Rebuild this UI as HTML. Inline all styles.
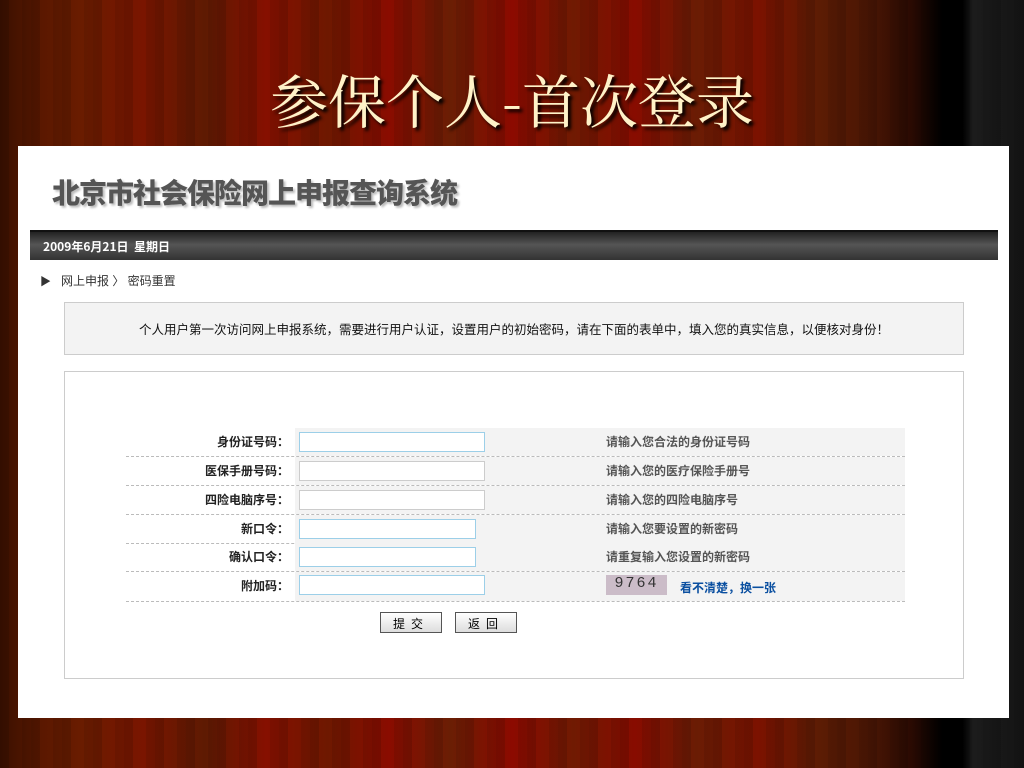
<!DOCTYPE html>
<html><head><meta charset="utf-8"><style>
*{margin:0;padding:0;box-sizing:border-box}
body{width:1024px;height:768px;overflow:hidden;position:relative;font-family:"Liberation Sans","Noto Sans CJK SC",sans-serif;
background:linear-gradient(90deg,#3a1000 0%,#5a1800 4%,#6a1c00 8%,#7a1500 14%,#5e1a02 20%,#861000 26%,#6e1800 32%,#8a0c00 38%,#6a1e04 44%,#8c0a00 50%,#701a02 56%,#880c00 62%,#6a1c04 68%,#7c1200 74%,#5c1c04 80%,#4a1604 85%,#2a0a02 89%,#000 92%,#000 94%,#1c1c1c 95%,#141414 100%);}
.curt{position:absolute;left:0;top:0;width:1024px;height:768px;background:repeating-linear-gradient(90deg,rgba(0,0,0,.12) 0 9px,rgba(255,255,255,0) 9px 22px,rgba(0,0,0,.08) 22px 31px)}
h1{position:absolute;top:56px;left:0;width:1024px;text-align:center;font:400 58px "Noto Serif CJK SC",serif;color:#fff2c8;text-shadow:3px 3px 3px #000}
.panel{position:absolute;left:18px;top:146px;width:991px;height:572px;background:#fff}
.sys{position:absolute;left:34px;top:26px;font:900 28px "Noto Sans CJK SC",sans-serif;color:#555;text-shadow:2px 2px 2px #bbb;letter-spacing:-1px}
.bar{position:absolute;left:12px;top:84px;width:968px;height:30px;background:linear-gradient(#222,#555 45%,#333);border-top:2px solid #111;color:#fff;font:bold 12px "Noto Sans CJK SC",sans-serif;padding:6px 0 0 13px}
.bc{position:absolute;left:22px;top:126px;font-size:12px;color:#333}
.bc b{font-size:11px;margin-right:10px}
.note{position:absolute;left:46px;top:156px;width:900px;height:53px;background:#f3f3f3;border:1px solid #ccc;font-size:12.5px;text-align:center;padding-top:16px;color:#111}
.form{position:absolute;left:46px;top:225px;width:900px;height:308px;border:1px solid #ccc}
.row{position:absolute;left:108px;width:779px;height:29px;border-bottom:1px dashed #bbb}
.row .bg{position:absolute;left:169px;top:0;width:610px;height:28px;background:#f3f3f3}
.lab{position:absolute;right:616px;top:5px;font:bold 12px "Noto Sans CJK SC",sans-serif;color:#222;white-space:nowrap}
.inp{position:absolute;left:173px;top:4px;height:20px;background:#fff;border:1px solid #9ccfe8}
.inp.g{border-color:#ccc}
.hint{position:absolute;left:480px;top:5px;font:bold 12px "Noto Sans CJK SC",sans-serif;color:#555}
.btn{position:absolute;top:466px;width:62px;height:21px;border:1px solid #555;background:linear-gradient(#fff,#ddd);font-size:12px;text-align:center;padding-top:2px;letter-spacing:6px}
</style></head><body>
<div class="curt"></div>
<h1>参保个人-首次登录</h1>
<div class="panel">
<div class="sys">北京市社会保险网上申报查询系统</div>
<div class="bar">2009年6月21日&nbsp; 星期日</div>
<div class="bc"><b>▶</b>网上申报 〉&nbsp;密码重置</div>
<div class="note">个人用户第一次访问网上申报系统，需要进行用户认证，设置用户的初始密码，请在下面的表单中，填入您的真实信息，以便核对身份！</div>
<div class="form"></div>
<div class="row" style="top:282px"><div class="bg"></div><span class="lab">身份证号码：</span><div class="inp" style="width:186px"></div><span class="hint">请输入您合法的身份证号码</span></div>
<div class="row" style="top:311px"><div class="bg"></div><span class="lab">医保手册号码：</span><div class="inp g" style="width:186px"></div><span class="hint">请输入您的医疗保险手册号</span></div>
<div class="row" style="top:340px"><div class="bg"></div><span class="lab">四险电脑序号：</span><div class="inp g" style="width:186px"></div><span class="hint">请输入您的四险电脑序号</span></div>
<div class="row" style="top:369px"><div class="bg"></div><span class="lab">新口令：</span><div class="inp" style="width:177px"></div><span class="hint">请输入您要设置的新密码</span></div>
<div class="row" style="top:397px"><div class="bg"></div><span class="lab">确认口令：</span><div class="inp" style="width:177px"></div><span class="hint">请重复输入您设置的新密码</span></div>
<div class="row" style="top:426px;height:30px"><div class="bg" style="height:29px"></div><span class="lab">附加码：</span><div class="inp" style="width:186px;top:3px"></div>
<span style="position:absolute;left:480px;top:3px;width:61px;height:20px;background:#cbbcc8;font:15px 'Liberation Mono',monospace;color:#333;text-align:center;letter-spacing:2px">9764</span>
<span class="hint" style="left:554px;top:7px;color:#0a4fa0">看不清楚，换一张</span></div>
<div class="btn" style="left:362px">提交</div>
<div class="btn" style="left:437px">返回</div>
</div>
</body></html>
